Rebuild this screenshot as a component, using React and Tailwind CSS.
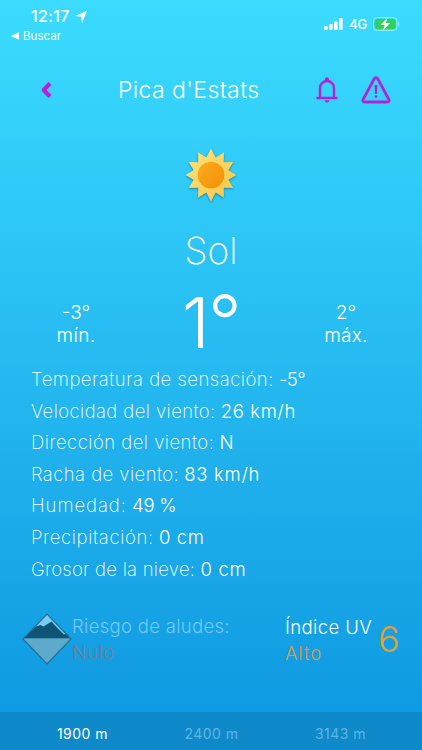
// src/App.jsx
import { useState } from 'react';

const details = [
  { label: 'Temperatura de sensación:', value: '-5°', spacing: 'tracking-[0.51px]', valueSpacing: 'tracking-[-0.5px]' },
  { label: 'Velocidad del viento:', value: '26 km/h', spacing: 'tracking-[0.42px]', valueSpacing: 'tracking-[0.6px]' },
  { label: 'Dirección del viento:', value: 'N', spacing: 'tracking-[0.49px]', valueSpacing: 'tracking-[0.5px]' },
  { label: 'Racha de viento:', value: '83 km/h', spacing: 'tracking-[0.45px]', valueSpacing: 'tracking-[0.7px]' },
  { label: 'Humedad:', value: '49 %', spacing: 'tracking-[0.95px]', valueSpacing: 'tracking-[-0.2px]' },
  { label: 'Precipitación:', value: '0 cm', spacing: 'tracking-[0.65px]', valueSpacing: 'tracking-[0.6px]' },
  { label: 'Grosor de la nieve:', value: '0 cm', spacing: 'tracking-[0.26px]', valueSpacing: 'tracking-[0.7px]' },
];

const altitudes = ['1900 m', '2400 m', '3143 m'];

function StatusBar() {
  return (
    <div className="h-[50px] flex justify-between text-white">
      <div className="pl-[11px] pt-[7px]">
        <div className="flex items-center pl-5 h-[19px]">
          <span className="text-[16px] leading-[19px] font-medium tracking-[0.3px]">12:17</span>
          <svg className="ml-[5px] w-3 h-3" viewBox="0 0 12 12" fill="currentColor">
            <path d="M12 0 7 12 6.2 5.8 0 5z" />
          </svg>
        </div>
        <div className="flex items-center h-[20px]">
          <svg className="w-2 h-2" viewBox="0 0 8 8" fill="currentColor">
            <path d="M0 4 8 .2v7.6z" />
          </svg>
          <span className="ml-1 text-[11.5px] leading-5 font-normal tracking-[0.05px]">Buscar</span>
        </div>
      </div>
      <div className="flex items-center h-[18px] mt-[15px] pr-[22px]">
        <svg className="w-[19px] h-3" viewBox="0 0 19 12" fill="currentColor">
          <rect x="0" y="8" width="3.6" height="4" rx="1" />
          <rect x="5" y="6" width="3.6" height="6" rx="1" />
          <rect x="10" y="3.5" width="3.6" height="8.5" rx="1" />
          <rect x="15" y="0" width="3.6" height="12" rx="1" />
        </svg>
        <span className="ml-[6px] mt-0.5 text-[13px] font-medium tracking-[-0.3px]">4G</span>
        <svg className="ml-[6px] w-[27px] h-[14px]" viewBox="0 0 27 14">
          <rect x=".5" y=".5" width="23.5" height="13" rx="3.8" fill="none" stroke="#fff" strokeOpacity=".45" />
          <rect x="2" y="2" width="20.5" height="10" rx="2" fill="#30d158" />
          <path d="M25.3 4.8c1.6.5 1.6 3.9 0 4.4z" fill="#fff" fillOpacity=".5" />
          <path d="M14.5.5 7.5 8h4.2L10 13.5 17 6h-4.2z" fill="#fff" />
        </svg>
      </div>
    </div>
  );
}

function Header() {
  return (
    <div className="h-20 flex items-center pl-[39px] pr-[31px]">
      <svg className="w-3.5 h-[18px] shrink-0" viewBox="0 0 14 18" fill="none" stroke="#c01bd8" strokeWidth="4">
        <path d="m11 2.5-6.3 6.5 6.3 6.5" strokeLinejoin="round" />
      </svg>
      <h1 className="ml-[65px] w-[194px] text-[23px] font-light tracking-[0.4px] whitespace-nowrap">Pica d'Estats</h1>
      <svg className="ml-[4px] w-[22px] h-[26px] shrink-0" viewBox="0 0 22 26" fill="none" stroke="#b322d6" strokeWidth="2.4">
        <path d="M4 21V11a7 7 0 0 1 14 0v10M0.5 21h21" />
        <path d="M9 2.2a2 2 0 0 1 4 0V3.5H9zM8.5 23.3a2.5 2.2 0 0 0 5 0z" fill="#b322d6" stroke="none" />
      </svg>
      <svg className="ml-[23px] w-[30px] h-[28px] shrink-0" viewBox="0 0 30 28" fill="none" stroke="#b322d6" strokeWidth="2.8" strokeLinejoin="round">
        <path d="M13.3 2.7 2.2 23.3c-.8 1.5 0 2.7 1.6 2.7h22.4c1.6 0 2.4-1.2 1.6-2.7L16.7 2.7c-.8-1.4-2.6-1.4-3.4 0z" />
        <path d="M13.6 9h2.8l-.5 9h-1.8zM13.8 19.4h2.4v2.4h-2.4z" fill="#b322d6" stroke="none" />
      </svg>
    </div>
  );
}

function SunIcon() {
  return (
    <svg className="w-[54px] h-[56px] drop-shadow-[0_1px_1px_rgba(0,60,90,0.5)]" viewBox="-27 -28 54 56">
      <defs>
        <linearGradient id="rays" x1="0" y1="0" x2="1" y2="1">
          <stop offset="0" stopColor="#ffe47c" />
          <stop offset="1" stopColor="#f7c548" />
        </linearGradient>
        <linearGradient id="disc" x1="0" y1="0" x2="1" y2="1">
          <stop offset="0" stopColor="#ffad1d" />
          <stop offset="1" stopColor="#f28f08" />
        </linearGradient>
      </defs>
      <path
        d="M0-26.5 4.7-17.4 13-22.7 12.7-12.7 22.3-13 17.4-4.7 25.5 0 17.4 4.7 22.3 13 12.7 12.7 13 22.7 4.7 17.4 0 26.5-4.7 17.4-13 22.7-12.7 12.7-22.3 13-17.4 4.7-25.5 0-17.4-4.7-22.3-13-12.7-12.7-13-22.7-4.7-17.4z"
        fill="url(#rays)"
      />
      <circle r="13.3" fill="url(#disc)" />
    </svg>
  );
}

function AvalancheIcon() {
  return (
    <svg className="w-[50px] h-[52px] shrink-0" viewBox="0 0 50 52">
      <path d="M25 1 49 26H1z" fill="#7accf4" />
      <path d="M1 26h48L25 51z" fill="#5eaaca" />
      <path d="M1.5 25.5 14 13.5l4.5-1.5 3 1.5 8-5 4.5 5 8 8 2.5-1.5 4 5.5z" fill="#0d5475" />
      <path d="M25 1 49 26 25 51 1 26z" fill="none" stroke="#236f92" strokeWidth="1.2" />
    </svg>
  );
}

export default function App() {
  const [selected, setSelected] = useState(0);

  return (
    <div className="w-[422px] h-[750px] flex flex-col overflow-hidden bg-linear-to-b from-[#3bdcff] to-[#0d96e0] font-['Inter',sans-serif] text-white">
      <StatusBar />
      <Header />

      <div className="flex flex-col items-center pt-[17px]">
        <SunIcon />
        <p className="mt-[23px] h-[50px] text-[37px] leading-[50px] font-extralight">Sol</p>
      </div>

      <div className="h-[82px] mt-[7px] px-[26px] flex justify-between">
        <div className="w-[100px] pt-[18px] text-center text-[19px] leading-[23px]">
          <p className="font-[350]">-3°</p>
          <p className="font-light tracking-[0.3px]">mín.</p>
        </div>
        <p className="text-[70px] leading-[80px] font-light tracking-[-1.5px] whitespace-nowrap">
          1<span className="text-[74px] leading-none font-light">°</span>
        </p>
        <div className="w-[100px] pt-[18px] text-center text-[19px] leading-[23px]">
          <p className="font-[350]">2°</p>
          <p className="font-light tracking-[0.3px]">máx.</p>
        </div>
      </div>

      <div className="pl-[31px]">
        {details.map((item) => (
          <div key={item.label} className="h-[31.6px] text-[18.5px] leading-[29px] whitespace-nowrap">
            <span className={`font-extralight ${item.spacing}`}>{item.label}</span>{' '}
            <span className={`font-[350] ${item.valueSpacing}`}>{item.value}</span>
          </div>
        ))}
      </div>

      <div className="mt-[27px] pl-[22px] pr-[22px] flex items-start">
        <AvalancheIcon />
        <div className="w-[213px] text-[18.5px] leading-[26px] font-light tracking-[0.3px] whitespace-nowrap">
          <p className="text-[#72caf5]">Riesgo de aludes:</p>
          <p className="text-[#717f90] tracking-[0.6px]">Nulo</p>
        </div>
        <div className="w-[93px] pt-px text-[18.5px] leading-[26px] font-light tracking-[0.4px] whitespace-nowrap">
          <p>Índice UV</p>
          <p className="text-[#dc9c38] tracking-[0.9px]">Alto</p>
        </div>
        <span className="text-[36px] leading-[52px] font-[350] text-[#dfa03a]">6</span>
      </div>

      <div className="mt-auto h-[38px] bg-[#0e89c9] flex">
        {altitudes.map((altitude, index) => (
          <button
            key={altitude}
            onClick={() => setSelected(index)}
            className={`w-[129px] text-[14px] pt-1 first:ml-[18px] tracking-[0.5px] ${selected === index ? 'text-white' : 'text-[#5eb6e4]'}`}
          >
            {altitude}
          </button>
        ))}
      </div>
    </div>
  );
}
